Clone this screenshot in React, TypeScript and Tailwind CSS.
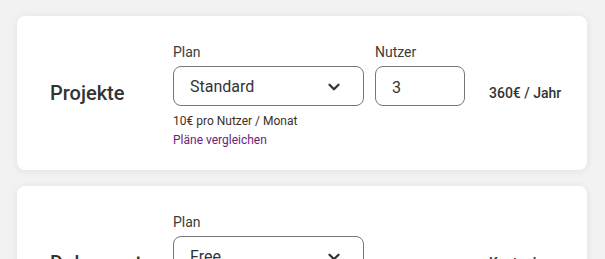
import { useState } from 'react'

type Row = {
  name: string
  plan: string
  users?: number
  price: string
  hint?: string
}

const rows: Row[] = [
  { name: 'Projekte', plan: 'Standard', users: 3, price: '360€ / Jahr', hint: '10€ pro Nutzer / Monat' },
  { name: 'Dokumente', plan: 'Free', price: 'Kostenlos', hint: 'Kostenlos für alle Nutzer' },
]

function Chevron() {
  return (
    <svg width="18" height="18" viewBox="0 0 24 24" fill="none" stroke="#333" strokeWidth="3" strokeLinecap="round" strokeLinejoin="round">
      <path d="M6 9l6 6 6-6" />
    </svg>
  )
}

function PlanCard({ row }: { row: Row }) {
  const [users, setUsers] = useState(row.users ?? 1)

  return (
    <div className="w-[570px] shrink-0 bg-white rounded-lg shadow-[0_1px_8px_rgba(0,0,0,0.07)] flex items-center pt-[26px] pb-[22px]">
      <div className="w-[156px] pl-[33px] -mt-[4px] text-[20px] font-medium text-[#333]">{row.name}</div>
      <div className="w-[191px] flex flex-col">
        <label className="text-sm leading-5 text-[#3c3c3c] mb-1">Plan</label>
        <div className="h-[40px] border border-[#767676] rounded-lg flex items-center justify-between pl-4 pr-[20px] text-base text-[#333] pt-[2px]">
          <span>{row.plan}</span>
          <Chevron />
        </div>
        <div className="text-xs leading-4 text-[#3a2f25] mt-[7px]">{row.hint}</div>
        <a className="text-xs leading-4 text-[#6a2377] mt-[3px]">Pläne vergleichen</a>
      </div>
      {row.users !== undefined ? (
        <div className="w-[90px] ml-[11px] flex flex-col self-start">
          <label className="text-sm leading-5 text-[#3c3c3c] mb-1">Nutzer</label>
          <input
            value={users}
            onChange={e => setUsers(Number(e.target.value) || 0)}
            className="h-[40px] w-[90px] border border-[#767676] rounded-lg pl-4 pt-[2px] text-base text-[#333] outline-none"
          />
        </div>
      ) : (
        <div className="w-[90px] ml-[11px]" />
      )}
      <div className="ml-6 -mt-[4px] text-sm font-medium text-[#333]">{row.price}</div>
    </div>
  )
}

export default function App() {
  return (
    <div className="min-h-screen bg-[#f2f2f2] pt-4 pl-[17px] flex flex-col gap-4" style={{ fontFamily: 'Roboto, "Liberation Sans", sans-serif' }}>
      {rows.map(r => (
        <PlanCard key={r.name} row={r} />
      ))}
    </div>
  )
}
